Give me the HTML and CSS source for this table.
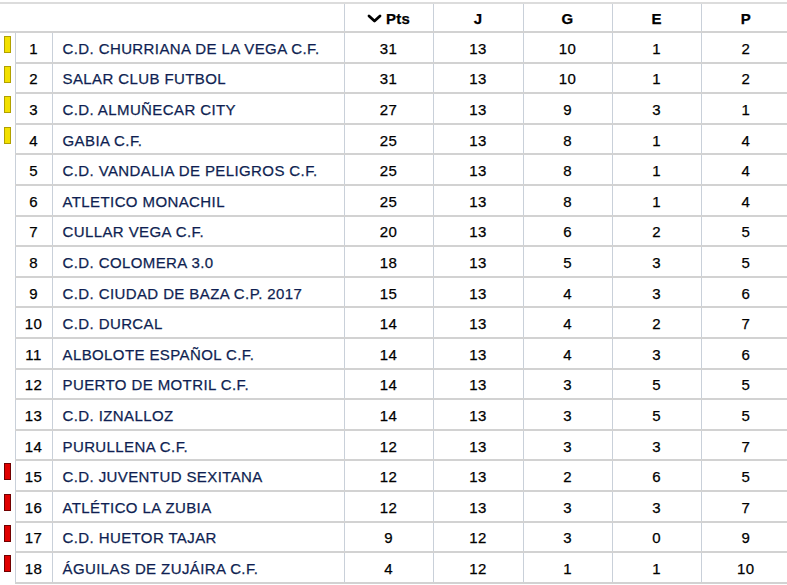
FILE: index.html
```html
<!DOCTYPE html>
<html>
<head>
<meta charset="utf-8">
<link rel="stylesheet" href="styles.css">
</head>
<body>
<table class="standings">
  <colgroup>
    <col class="c-mark"><col class="c-pos"><col class="c-name"><col class="c-pts"><col class="c-j"><col class="c-g"><col class="c-e"><col class="c-p">
  </colgroup>
  <thead>
    <tr>
      <th colspan="3" class="h-blank"></th>
      <th class="h-num"><span class="sort"><svg class="chev" viewBox="0 0 15 9" width="15" height="9"><path d="M2 2 L7.5 7 L13 2" fill="none" stroke="#000" stroke-width="2.8" stroke-linecap="round" stroke-linejoin="round"/></svg>Pts</span></th>
      <th class="h-num">J</th>
      <th class="h-num">G</th>
      <th class="h-num">E</th>
      <th class="h-num">P</th>
    </tr>
  </thead>
  <tbody>
    <tr><td class="mark"><span class="flag up"></span></td><td class="pos">1</td><td class="name">C.D. CHURRIANA DE LA VEGA C.F.</td><td>31</td><td>13</td><td>10</td><td>1</td><td>2</td></tr>
    <tr><td class="mark"><span class="flag up"></span></td><td class="pos">2</td><td class="name">SALAR CLUB FUTBOL</td><td>31</td><td>13</td><td>10</td><td>1</td><td>2</td></tr>
    <tr><td class="mark"><span class="flag up"></span></td><td class="pos">3</td><td class="name">C.D. ALMUÑECAR CITY</td><td>27</td><td>13</td><td>9</td><td>3</td><td>1</td></tr>
    <tr><td class="mark"><span class="flag up"></span></td><td class="pos">4</td><td class="name">GABIA C.F.</td><td>25</td><td>13</td><td>8</td><td>1</td><td>4</td></tr>
    <tr><td class="mark"></td><td class="pos">5</td><td class="name">C.D. VANDALIA DE PELIGROS C.F.</td><td>25</td><td>13</td><td>8</td><td>1</td><td>4</td></tr>
    <tr><td class="mark"></td><td class="pos">6</td><td class="name">ATLETICO MONACHIL</td><td>25</td><td>13</td><td>8</td><td>1</td><td>4</td></tr>
    <tr><td class="mark"></td><td class="pos">7</td><td class="name">CULLAR VEGA C.F.</td><td>20</td><td>13</td><td>6</td><td>2</td><td>5</td></tr>
    <tr><td class="mark"></td><td class="pos">8</td><td class="name">C.D. COLOMERA 3.0</td><td>18</td><td>13</td><td>5</td><td>3</td><td>5</td></tr>
    <tr><td class="mark"></td><td class="pos">9</td><td class="name">C.D. CIUDAD DE BAZA C.P. 2017</td><td>15</td><td>13</td><td>4</td><td>3</td><td>6</td></tr>
    <tr><td class="mark"></td><td class="pos">10</td><td class="name">C.D. DURCAL</td><td>14</td><td>13</td><td>4</td><td>2</td><td>7</td></tr>
    <tr><td class="mark"></td><td class="pos">11</td><td class="name">ALBOLOTE ESPAÑOL C.F.</td><td>14</td><td>13</td><td>4</td><td>3</td><td>6</td></tr>
    <tr><td class="mark"></td><td class="pos">12</td><td class="name">PUERTO DE MOTRIL C.F.</td><td>14</td><td>13</td><td>3</td><td>5</td><td>5</td></tr>
    <tr><td class="mark"></td><td class="pos">13</td><td class="name">C.D. IZNALLOZ</td><td>14</td><td>13</td><td>3</td><td>5</td><td>5</td></tr>
    <tr><td class="mark"></td><td class="pos">14</td><td class="name">PURULLENA C.F.</td><td>12</td><td>13</td><td>3</td><td>3</td><td>7</td></tr>
    <tr><td class="mark"><span class="flag down"></span></td><td class="pos">15</td><td class="name">C.D. JUVENTUD SEXITANA</td><td>12</td><td>13</td><td>2</td><td>6</td><td>5</td></tr>
    <tr><td class="mark"><span class="flag down"></span></td><td class="pos">16</td><td class="name">ATLÉTICO LA ZUBIA</td><td>12</td><td>13</td><td>3</td><td>3</td><td>7</td></tr>
    <tr><td class="mark"><span class="flag down"></span></td><td class="pos">17</td><td class="name">C.D. HUETOR TAJAR</td><td>9</td><td>12</td><td>3</td><td>0</td><td>9</td></tr>
    <tr><td class="mark"><span class="flag down"></span></td><td class="pos">18</td><td class="name">ÁGUILAS DE ZUJÁIRA C.F.</td><td>4</td><td>12</td><td>1</td><td>1</td><td>10</td></tr>
  </tbody>
</table>
</body>
</html>
```
FILE: styles.css
```css
html, body {
  margin: 0;
  padding: 0;
  background: #fff;
  overflow: hidden;
}
body {
  padding-top: 2px;
  font-family: "Liberation Sans", Arial, sans-serif;
  font-size: 15px;
  letter-spacing: 0.4px;
  color: #000;
  -webkit-text-stroke: 0.25px currentColor;
}
.standings {
  width: 789px;
  border-collapse: collapse;
  table-layout: fixed;
  border-top: 2px solid #dcdcdc;
}
.c-mark { width: 15px; }
.c-pos { width: 37px; }
.c-name { width: 292px; }
.c-pts { width: 89px; }
.c-j { width: 90px; }
.c-g { width: 89px; }
.c-e { width: 89px; }
.c-p { width: 89px; }

thead tr { height: 29px; }
th {
  font-weight: bold;
  text-align: center;
  padding: 1px 0 0;
  border-left: 1px solid #c9d0d9;
  border-bottom: 2px solid #d2d2d2;
  letter-spacing: 0.3px;
}
th.h-blank { border-left: none; }
.sort {
  display: inline-flex;
  align-items: center;
  gap: 4px;
}
.chev { display: block; }

tbody tr { height: 30.6px; }
td {
  padding: 2px 0 0;
  text-align: center;
  border-left: 1px solid #c9d0d9;
  border-bottom: 2px solid #d2d2d2;
  white-space: nowrap;
}
td.mark {
  border-left: none;
  border-bottom: none;
  text-align: left;
  padding: 0 0 0 4px;
  vertical-align: top;
}
td.pos { text-align: center; }
td.name {
  text-align: left;
  padding-left: 10px;
  color: #0f1f52;
}
.flag {
  display: block;
  margin-top: 3px;
  width: 5px;
  height: 15px;
  border: 1px solid #9a8a00;
}
.flag.up { background: #f2e000; border-color: #b0a000; }
.flag.down { background: #e00000; border-color: #700000; }
```
